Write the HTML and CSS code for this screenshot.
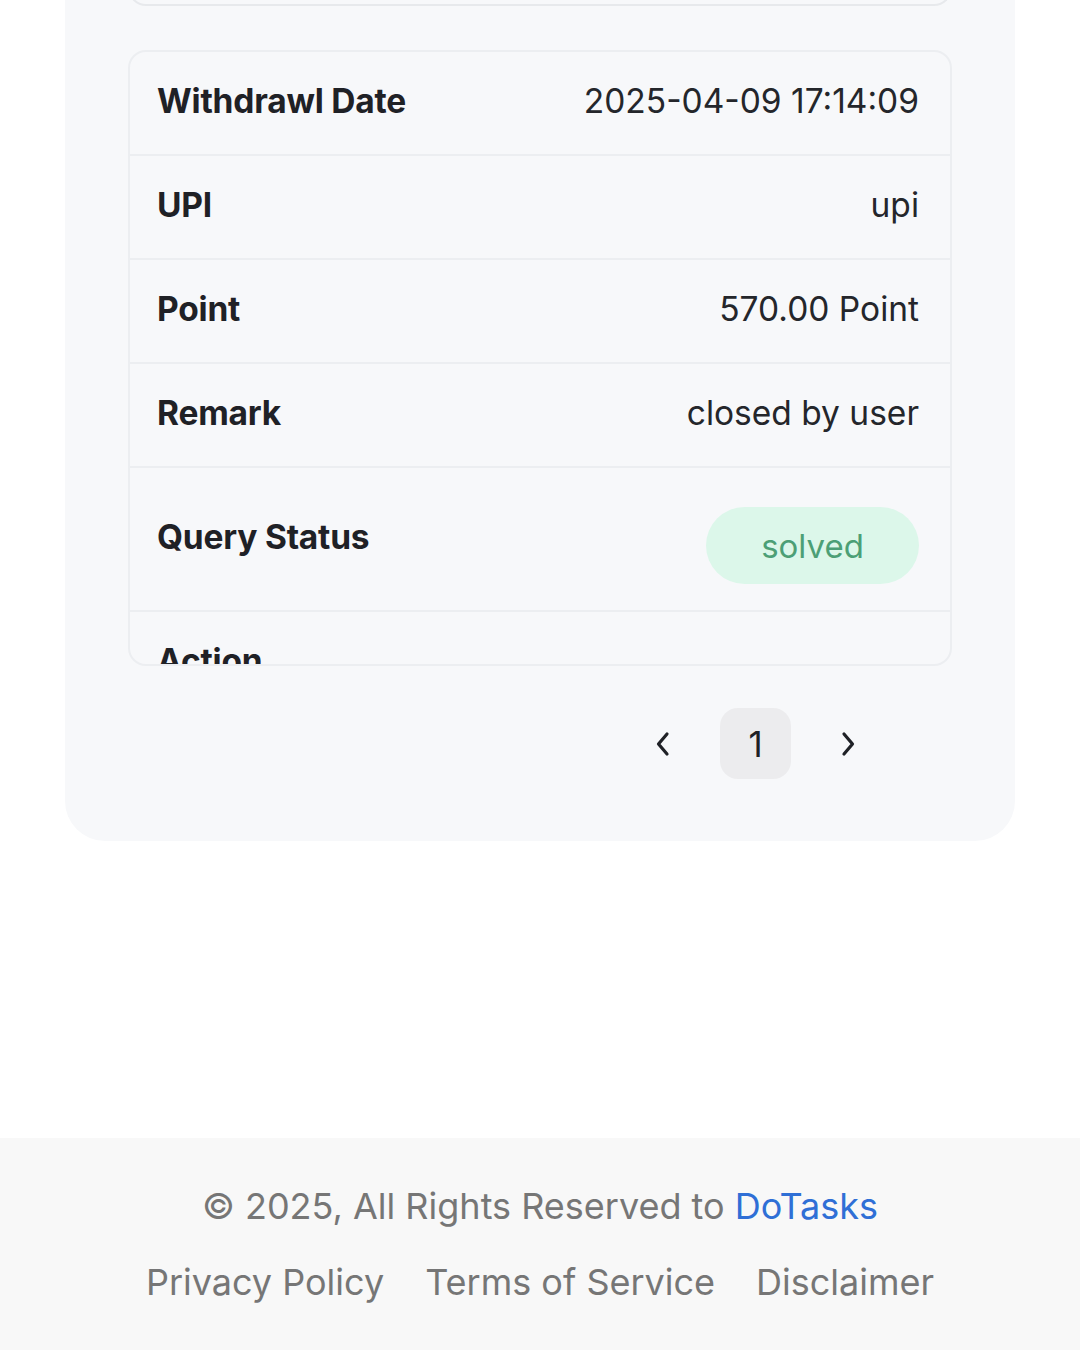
FILE: index.html
```html
<!DOCTYPE html>
<html lang="en">
<head>
<meta charset="utf-8">
<title>Withdrawal Details</title>
<link rel="stylesheet" href="styles.css">
</head>
<body>
<main class="page">
  <section class="panel">
    <div class="prev-card"></div>
    <div class="detail-card">
      <div class="row">
        <span class="label">Withdrawl Date</span>
        <span class="value">2025-04-09 17:14:09</span>
      </div>
      <div class="row">
        <span class="label">UPI</span>
        <span class="value">upi</span>
      </div>
      <div class="row">
        <span class="label">Point</span>
        <span class="value">570.00 Point</span>
      </div>
      <div class="row">
        <span class="label">Remark</span>
        <span class="value">closed by user</span>
      </div>
      <div class="row row-status">
        <span class="label">Query Status</span>
        <span class="badge">solved</span>
      </div>
      <div class="row">
        <span class="label">Action</span>
      </div>
    </div>
    <nav class="pager">
      <button class="pager-arrow" aria-label="Previous page">
        <svg viewBox="0 0 16 26" width="16" height="26"><path d="M12 3L3.5 13L12 23" fill="none" stroke="#1f2126" stroke-width="3.2" stroke-linecap="round" stroke-linejoin="round"/></svg>
      </button>
      <button class="pager-num">1</button>
      <button class="pager-arrow" aria-label="Next page">
        <svg viewBox="0 0 16 26" width="16" height="26"><path d="M4 3L12.5 13L4 23" fill="none" stroke="#1f2126" stroke-width="3.2" stroke-linecap="round" stroke-linejoin="round"/></svg>
      </button>
    </nav>
  </section>
</main>
<footer class="footer">
  <p class="copy">© 2025, All Rights Reserved to <a class="brand" href="#">DoTasks</a></p>
  <div class="links">
    <a href="#">Privacy Policy</a>
    <a href="#">Terms of Service</a>
    <a href="#">Disclaimer</a>
  </div>
</footer>
</body>
</html>
```

FILE: styles.css
```css
* { box-sizing: border-box; }
html, body {
  margin: 0;
  padding: 0;
  background: #ffffff;
  font-family: Inter, "Noto Sans", sans-serif;
  color: #1f2126;
}
.page {
  height: 1138px;
  overflow: hidden;
}
.panel {
  margin: -40px 65px 0;
  width: 950px;
  background: #f7f8fa;
  border-radius: 0 0 40px 40px;
  padding: 0 63px 62px;
}
.prev-card {
  height: 46px;
  border: 2px solid #e7e9ec;
  border-top: none;
  border-radius: 0 0 18px 18px;
  background: #f7f8fa;
  margin: 0 0 44px;
}
.detail-card {
  border: 2px solid #eceef1;
  border-radius: 18px;
  height: 616px;
  overflow: hidden;
  background: #f7f8fa;
}
.row {
  display: flex;
  justify-content: space-between;
  align-items: center;
  padding: 31px 31px 35px 27px;
  border-bottom: 2px solid #eceef1;
  line-height: 36px;
}
.row-status {
  align-items: flex-start;
  padding: 39px 31px 26px 27px;
}
.row-status .label { margin-top: 12px; }
.label {
  font-weight: 700;
  font-size: 33.5px;
  letter-spacing: -0.2px;
}
.value {
  font-size: 33.5px;
  font-weight: 400;
  color: #24262b;
}
.badge {
  display: inline-flex;
  align-items: center;
  justify-content: center;
  width: 213px;
  height: 77px;
  border-radius: 40px;
  background: #dcf7ea;
  color: #4c9f76;
  font-size: 33px;
}
.pager {
  display: flex;
  justify-content: flex-end;
  align-items: center;
  gap: 42px;
  padding: 42px 89px 0 0;
}
.pager button {
  border: none;
  background: none;
  padding: 0;
  font-family: inherit;
  color: #1f2126;
}
.pager-arrow {
  width: 30px;
  height: 71px;
  display: flex;
  align-items: center;
  justify-content: center;
}
.pager-num {
  width: 71px;
  height: 71px;
  border-radius: 18px;
  background: #ececee !important;
  font-size: 35px;
}
.footer {
  background: #f8f8f8;
  height: 212px;
  text-align: center;
  padding-top: 46px;
  color: #767676;
}
.copy {
  margin: 0;
  font-size: 36px;
  line-height: 44px;
}
.brand {
  color: #2f6fd6;
  text-decoration: none;
}
.links {
  margin-top: 32px;
  display: flex;
  justify-content: center;
  gap: 41px;
  font-size: 36px;
  line-height: 44px;
}
.links a {
  color: #767676;
  text-decoration: none;
}
```
